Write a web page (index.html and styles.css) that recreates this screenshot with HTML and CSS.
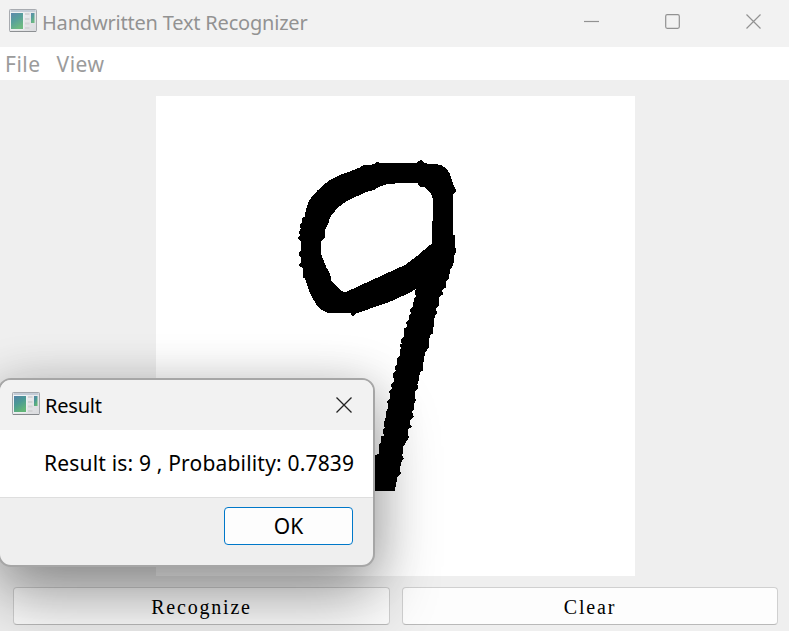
FILE: index.html
```html
<!DOCTYPE html>
<html lang="en">
<head>
<meta charset="utf-8">
<title>Handwritten Text Recognizer</title>
<link rel="stylesheet" href="styles.css">
</head>
<body>
<svg class="defs" width="0" height="0" aria-hidden="true">
  <defs>
    <linearGradient id="pane" x1="0" y1="0" x2=".5" y2="1"><stop offset="0" stop-color="#5280a8"/><stop offset=".5" stop-color="#4b9a94"/><stop offset="1" stop-color="#62b578"/></linearGradient>
    <linearGradient id="frame" x1="0" y1="0" x2="1" y2="1"><stop offset="0" stop-color="#f5f6f8"/><stop offset="1" stop-color="#d9dadd"/></linearGradient>
    <symbol id="app" viewBox="0 0 28 23">
      <rect x=".5" y=".5" width="27" height="22" rx=".8" fill="url(#frame)" stroke="#a2a6ab"/>
      <path d="M1 22.5h26" stroke="#85888c"/>
      <path d="M1.500 2h25" stroke="#c3cbd6" stroke-width="2"/>
      <rect x="1.500" y="3.500" width="13" height="17" fill="#f4f7f8"/>
      <rect x="2" y="4" width="12" height="16" fill="url(#pane)"/>
      <path d="M16 5h4.500M16 10h4.500M16 14.500h4.500M16 19h4.500" stroke="#d2d3d5" stroke-width="2"/>
      <rect x="22" y="4" width="3.500" height="10" fill="url(#pane)"/>
    </symbol>
  </defs>
</svg>
<main class="window">
  <header class="titlebar">
    <svg class="app-icon"><use href="#app"/></svg>
    <h1 class="title">Handwritten Text Recognizer</h1>
    <div class="controls">
      <svg width="16" height="16" viewBox="0 0 16 16"><path d="M0 7.500h15"/></svg>
      <svg width="16" height="16" viewBox="0 0 16 16"><rect x=".7" y=".7" width="13.600" height="13.600" rx="1.500"/></svg>
      <svg width="16" height="16" viewBox="0 0 16 16"><path d="M.5.5l14 14M14.500.5l-14 14"/></svg>
    </div>
  </header>
  <nav class="menubar"><span class="file">File</span><span class="view">View</span></nav>
  <section class="workspace">
    <svg class="canvas" viewBox="156 96 479 480">
      <g transform="translate(280 150) scale(.33333)">
        <path class="ink" d="M180 75L210 64L240 52L252 45L283 43L291 34L299 40L410 39L423 28L435 40L480 44Q500 52 510 72L521 105L530 124L519 134V255L525 257V292L530 303L522 318L520 345L510 360L507 385L497 395L499 412L486 420L490 432L478 440L477 465L467 478L473 489L464 497L462 525L458 540L459 550L452 555L446 572V592L440 602L434 607L433 635L428 640L429 662L420 667L416 690L412 704L415 714L406 724L404 742L409 750L402 762V780L396 786L401 799L390 812V824L395 830L385 838V858L388 862L379 874L370 890V910L365 914L371 925L363 938L359 962L364 970L352 982L344 1024H280V955L285 915L297 912L298 882L303 876L302 860L311 857L309 838L314 832L311 820L318 800V785L325 775L322 755L330 745L328 722L337 716L331 704L341 695L340 668L347 662L343 650L351 645V625L360 618V600L364 596L359 584L366 582L362 570L371 560L373 535L381 530L379 518L387 510V495L393 490L390 480L399 470L402 445L408 440L404 430L407 418L385 430L330 455L230 490L219 499L210 488H143Q120 480 108 462L90 430L75 385L68 382V355L56 345L64 335L62 322L55 312L63 300V275L52 264L60 255L56 247L62 236L60 225L67 218L66 205L74 200Q80 155 100 135Q124 107 155 87Z M320 103L370 98Q395 97 412 99L420 110L435 111Q456 130 459 150L456 280L412 317L375 345L320 370L200 425L190 426L175 414L155 395L150 372L138 350L124 315V275L136 260L135 240L145 220Q150 198 165 183Q185 160 210 148L260 126L285 119L294 112Z"/>
      </g>
    </svg>
    <div class="actions">
      <button class="button">Recognize</button>
      <button class="button">Clear</button>
    </div>
  </section>
</main>
<section class="dialog" role="dialog">
  <header class="dialog-title">
    <svg class="app-icon"><use href="#app"/></svg>
    <h2 class="dialog-name">Result</h2>
    <svg class="close" width="16" height="16" viewBox="0 0 16 16"><path d="M.5.5l15 15M15.500.5l-15 15"/></svg>
  </header>
  <p class="message">Result is: 9 , Probability: 0.7839</p>
  <footer class="dialog-footer"><button class="ok">OK</button></footer>
</section>
</body>
</html>
```
FILE: styles.css
```css
* { box-sizing: border-box; }
body { margin: 0; overflow: hidden; font-family: "Noto Sans", "Open Sans", sans-serif; }
h1, h2, p { margin: 0; font-weight: 400; white-space: nowrap; }
.defs { position: absolute; }
.window { width: 789px; height: 631px; display: flex; flex-direction: column; background: #efefef; }
.titlebar { height: 47px; background: #f2f2f2; display: flex; align-items: center; padding: 0 27px 3px 9px; }
.app-icon { width: 28px; height: 23px; flex: none; }
.titlebar .app-icon { opacity: .92; margin-top: -3px; }
.title { margin-left: 5px; padding-top: 2px; font-size: 20px; line-height: 28px; letter-spacing: -.2px; color: #929292; }
.controls { margin-left: auto; display: flex; gap: 65px; fill: none; stroke: #929292; stroke-width: 1.2; }
.controls svg { display: block; }
.menubar { height: 33px; background: #fff; color: #9b9b9b; font-size: 21px; line-height: 34px; display: flex; gap: 16px; padding-left: 5px; letter-spacing: .5px; }
.workspace { flex: 1; display: flex; flex-direction: column; align-items: center; padding-top: 16px; }
.canvas { width: 479px; height: 480px; background: #fff; display: block; margin-left: 2px; shape-rendering: crispEdges; }
.ink { fill: #000; fill-rule: evenodd; }
.actions { display: grid; grid-template-columns: 377px 376px; gap: 12px; margin: 11px 11px 0 13px; }
button { font: inherit; padding: 0; }
.button { height: 38px; background: #fdfdfd; border: 1px solid #d0d0d0; border-bottom-color: #b9b9b9; border-radius: 4px; color: #000; font-family: "Liberation Serif", serif; font-size: 20px; letter-spacing: 1.800px; padding-top: 3px; }
.dialog { position: absolute; left: -2px; top: 378px; width: 377px; height: 189px; border: 2px solid #a6a6a6; border-radius: 13px; overflow: hidden; background: #efefef; box-shadow: 0 34px 66px rgba(0,0,0,.32), 0 4px 50px rgba(0,0,0,.2); }
.dialog-title { height: 50px; background: #f2f2f2; display: flex; align-items: center; padding: 0 21px 0 12px; }
.dialog-title .app-icon { margin-top: -3px; }
.dialog-name { font-size: 20px; margin-left: 5px; letter-spacing: -.2px; }
.close { margin-left: auto; margin-top: -1px; fill: none; stroke: #222; stroke-width: 1.3; }
.message { height: 68px; background: #fff; border-bottom: 1px solid #dedede; padding-left: 44px; font-size: 21px; line-height: 67px; letter-spacing: .18px; }
.dialog-footer { display: flex; justify-content: flex-end; padding: 9px 20px 0 0; }
.ok { width: 129px; height: 38px; border: 1px solid #0078c9; border-radius: 4px; background: #fdfdfd; color: #000; font-size: 21px; }
```
